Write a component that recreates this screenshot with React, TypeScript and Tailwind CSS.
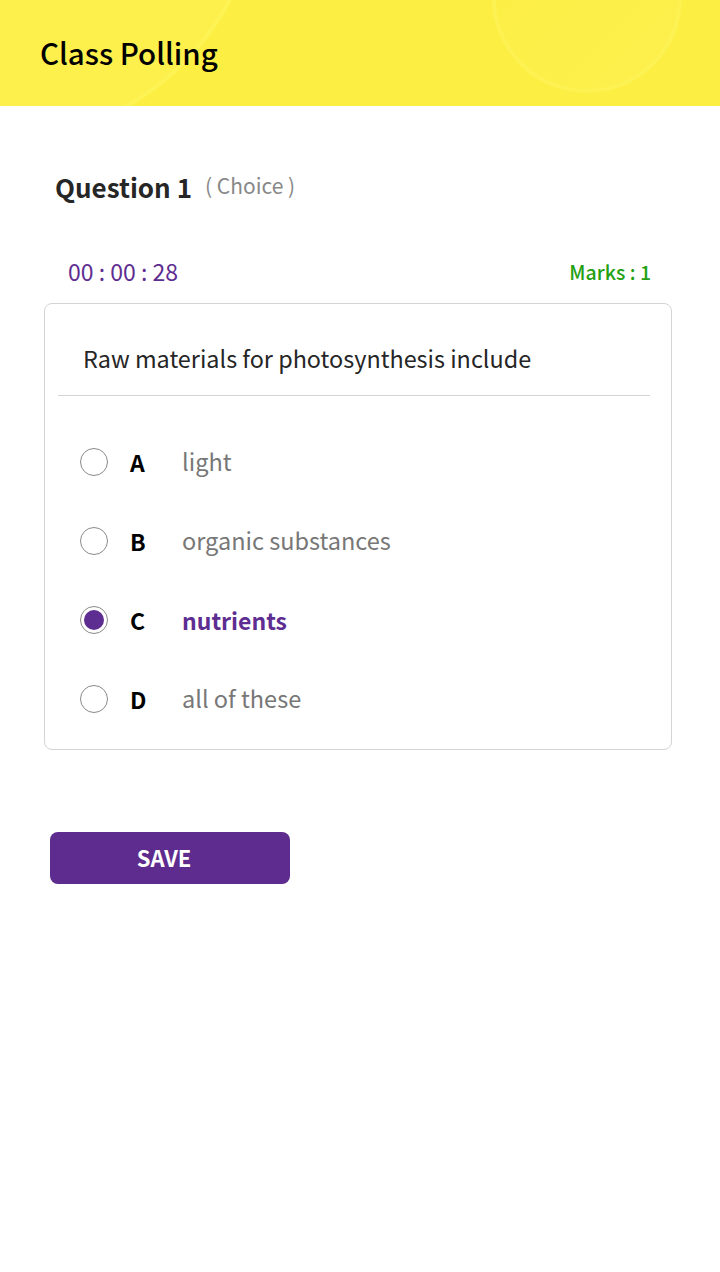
const options = [
  { key: "A", text: "light" },
  { key: "B", text: "organic substances" },
  { key: "C", text: "nutrients" },
  { key: "D", text: "all of these" },
];

export default function App() {
  const selected = "C";

  return (
    <div
      className="w-[720px] min-h-[1272px] bg-white"
      style={{ fontFamily: '"Noto Sans CJK SC", "Noto Sans", sans-serif' }}
    >
      {/* Header */}
      <div className="relative h-[106px] bg-[#fcee42] overflow-hidden flex items-center px-10">
        <div className="absolute left-[-261px] top-[-381px] w-[522px] h-[522px] rounded-full bg-[#fdf04c] border-[4px] border-[#fef358]/70" />
        <div className="absolute left-[492px] top-[-97px] w-[190px] h-[190px] rounded-full bg-gradient-to-br from-[#fcee42] to-[#fdf04e] border-[4px] border-[#fef358]/60" />
        <h1 className="relative text-[29.5px] font-medium text-black -mt-[2px]">Class Polling</h1>
      </div>

      <div className="px-[44px] pt-[61px]">
        {/* Question title */}
        <div className="flex items-center pl-[11px]">
          <span className="text-[26px] font-bold text-[#262626]">Question 1</span>
          <span className="ml-[13px] text-[21px] text-[#888] -mt-[2px]">( Choice )</span>
        </div>

        {/* Timer & marks */}
        <div className="flex items-center justify-between pl-[24px] pr-[25px] mt-[48px]">
          <span className="text-[23px] text-[#5e2d91]">00 : 00 : 28</span>
          <span className="text-[19.5px] font-medium text-[#22a012]">Marks : 1</span>
        </div>

        {/* Card */}
        <div className="mt-[14px] w-[628px] border border-[#d4d4d4] rounded-[8px] pb-[10px]">
          <div className="px-[38px] pt-[37px] pb-[19px] text-[23.4px] text-[#262626]">
            Raw materials for photosynthesis include
          </div>
          <div className="ml-[13px] mr-[21px] h-px bg-[#d4d4d4]" />
          <div className="flex flex-col pt-[27px]">
            {options.map((o) => {
              const active = o.key === selected;
              return (
                <div key={o.key} className="flex items-center h-[79px] pl-[35px]">
                  <div className="w-[28px] h-[28px] rounded-full border-[1.5px] border-[#8a8a8a] flex items-center justify-center">
                    {active && <div className="w-[20px] h-[20px] rounded-full bg-[#5e2d91]" />}
                  </div>
                  <span className="ml-[22px] w-[52px] text-[23px] font-bold text-black">{o.key}</span>
                  <span
                    className={
                      active
                        ? "text-[23px] font-bold text-[#5e2d91]"
                        : "text-[23.5px] text-[#777]"
                    }
                  >
                    {o.text}
                  </span>
                </div>
              );
            })}
          </div>
        </div>

        {/* Save */}
        <button className="mt-[82px] ml-[6px] w-[240px] h-[52px] rounded-[8px] bg-[#5e2b8e] text-white text-[22px] font-bold flex items-center justify-center pr-[12px]">
          SAVE
        </button>
      </div>
    </div>
  );
}
